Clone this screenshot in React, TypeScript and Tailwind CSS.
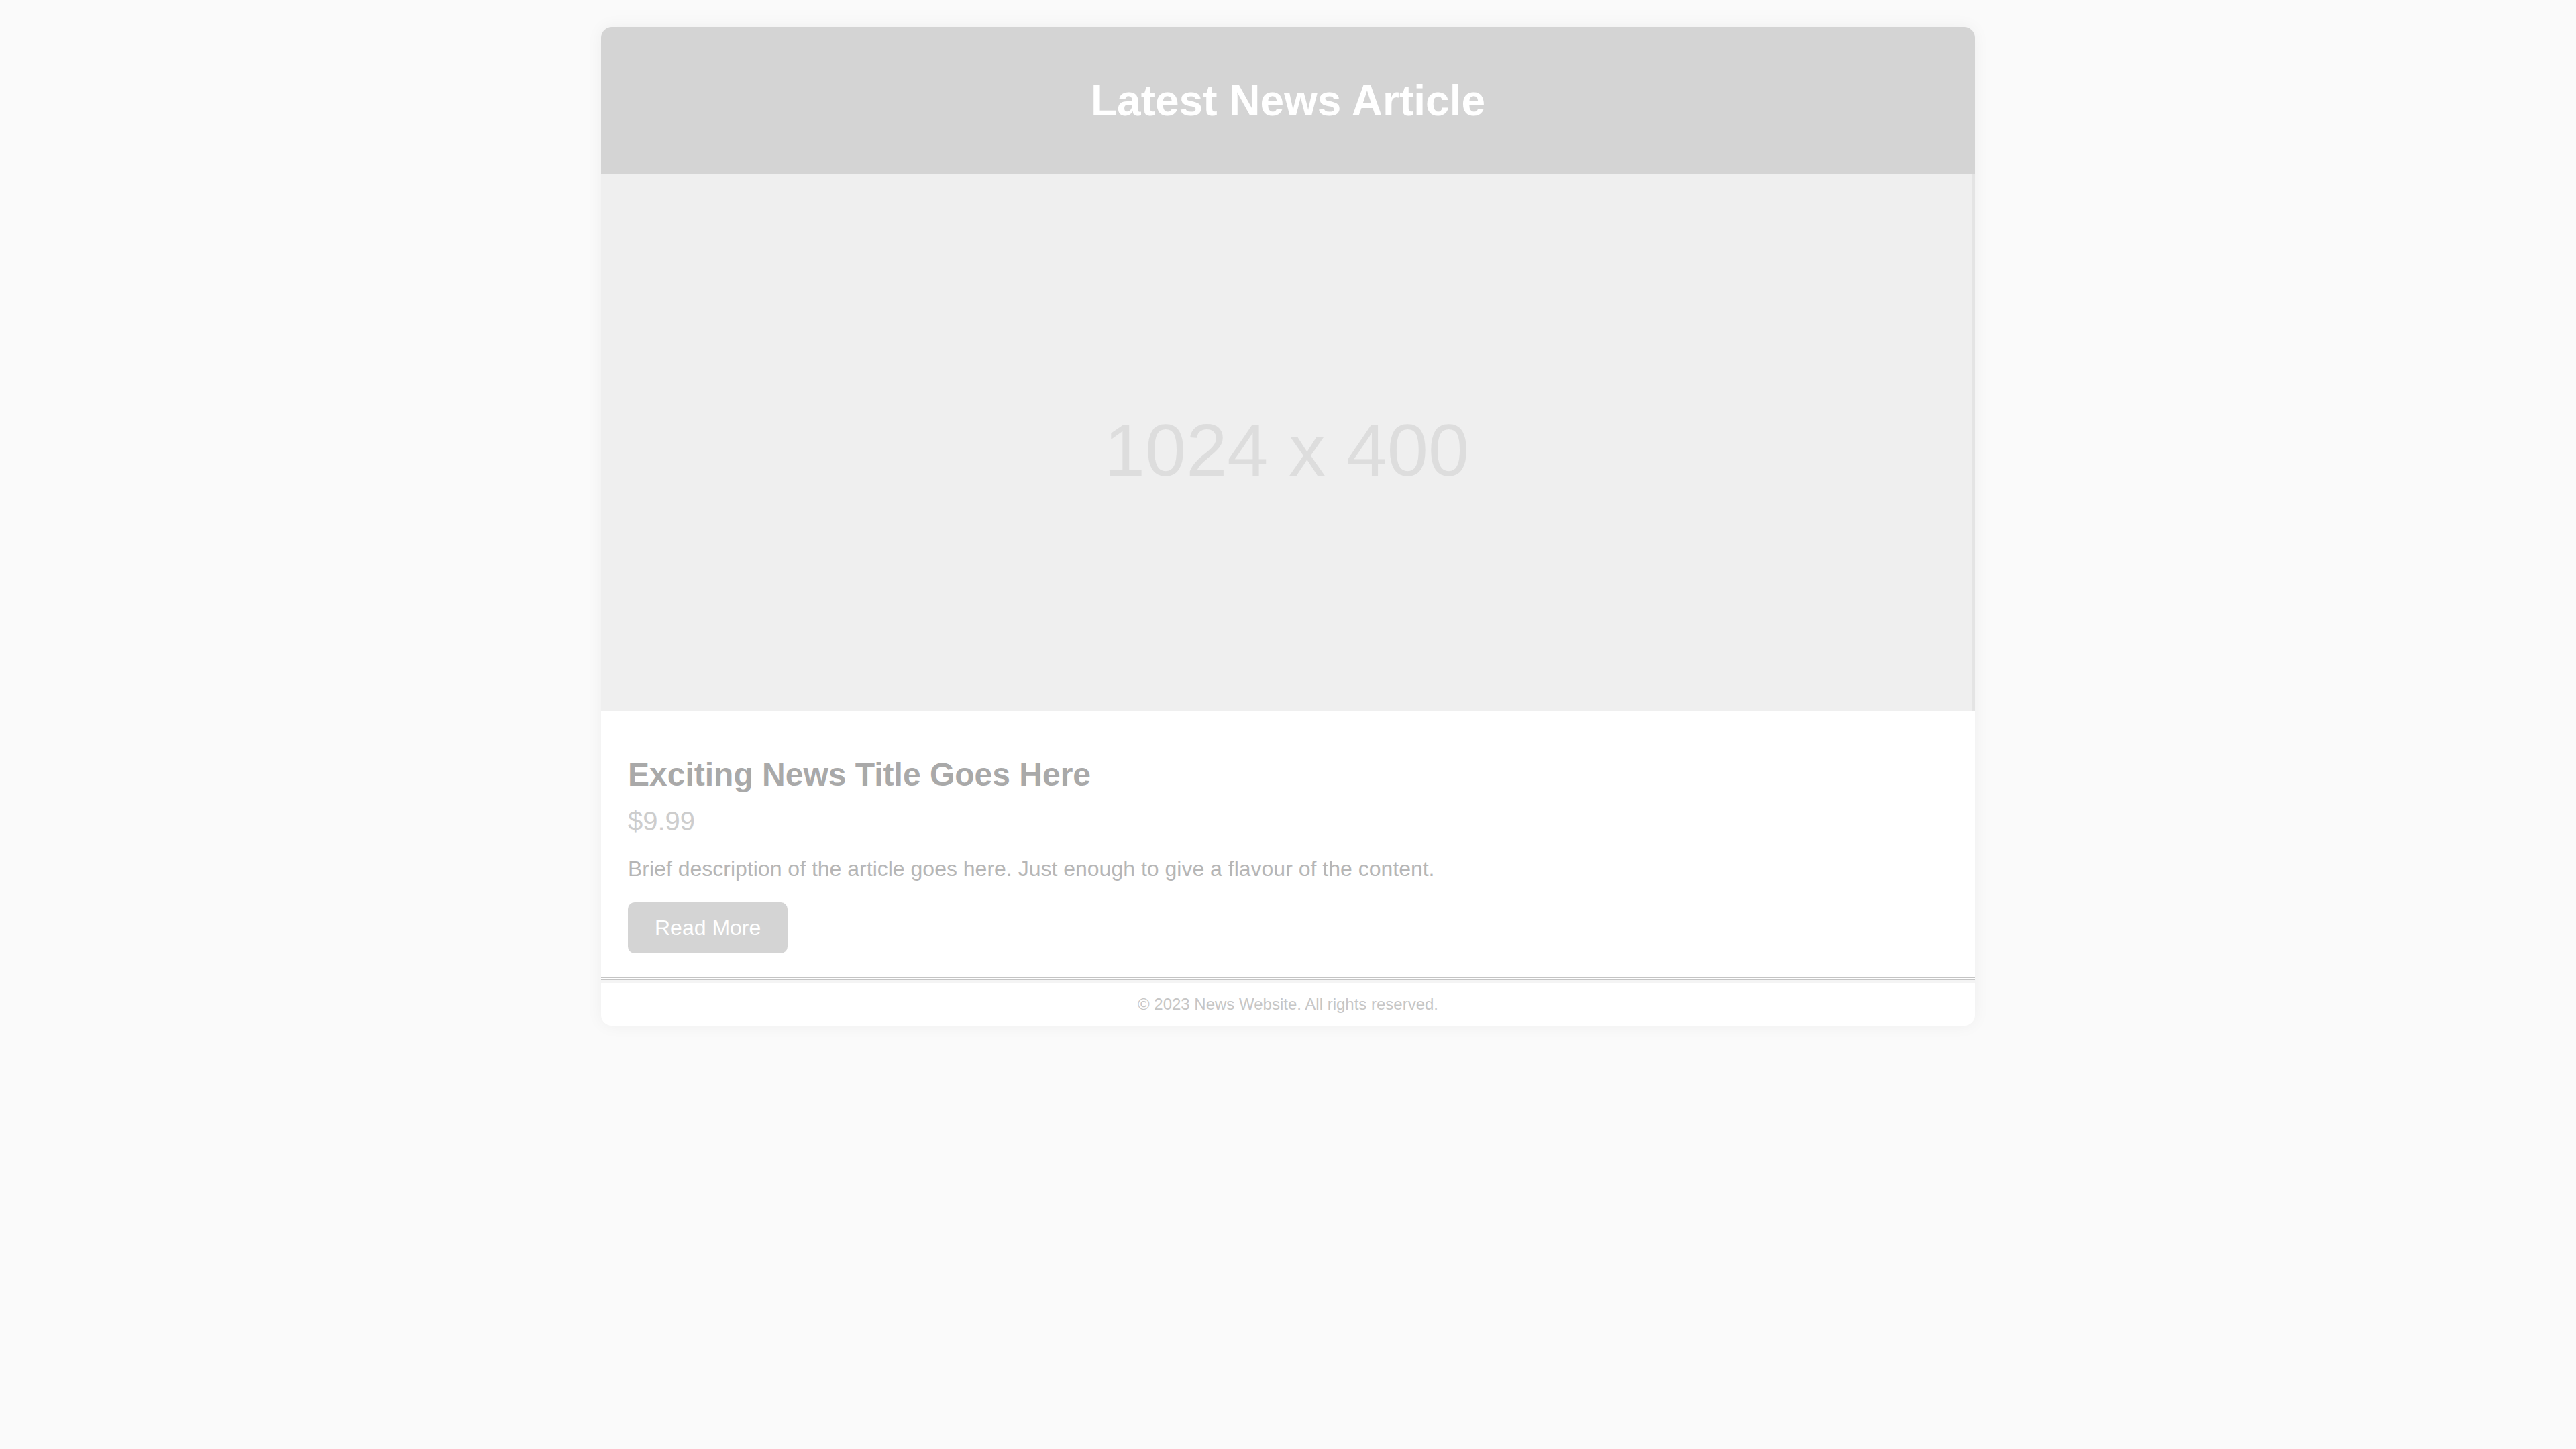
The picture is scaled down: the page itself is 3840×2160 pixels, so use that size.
import React from "react";

export default function App() {
  return (
    <div
      className="min-h-screen bg-[#fafafa] pt-[40px] pb-[40px]"
      style={{ fontFamily: '"Liberation Sans", Arial, sans-serif' }}
    >
      <div className="mx-auto w-[2048px] rounded-[16px] bg-white shadow-[0_0_24px_rgba(0,0,0,0.05)]">
        <header className="flex h-[220px] items-center justify-center rounded-t-[16px] bg-[#d4d4d4]">
          <h1 className="text-[64px] font-bold leading-none text-white">Latest News Article</h1>
        </header>
        <div className="flex h-[800px] items-center justify-center border-r-[4px] border-[#e4e4e4] bg-[#efefef] pt-[22px]">
          <span className="text-[110px] leading-none text-[#dddddd]">1024 x 400</span>
        </div>
        <div className="flex flex-col items-start px-[40px] pt-[63px] pb-[36px]">
          <h2 className="text-[48px] font-bold leading-[64px] text-[#a9a9a9]">
            Exciting News Title Goes Here
          </h2>
          <p className="mt-[9px] text-[40px] leading-[56px] text-[#cdcdcd]">$9.99</p>
          <p className="mt-[19px] text-[32px] leading-[48px] text-[#b6b6b6]">
            Brief description of the article goes here. Just enough to give a flavour of the content.
          </p>
          <button className="mt-[26px] h-[76px] rounded-[10px] bg-[#d4d4d4] px-[40px] text-[32px] leading-none text-white">
            Read More
          </button>
        </div>
        <div className="h-[1px] bg-[#c4c4c4]" />
        <div className="h-[2px] bg-white" />
        <div className="h-[1px] bg-[#c4c4c4]" />
        <footer className="rounded-b-[16px] border-t-[4px] border-[#f4f4f4] py-[14px] text-center">
          <p className="text-[24px] leading-[36px] text-[#c6c6c6]">
            © 2023 News Website. All rights reserved.
          </p>
        </footer>
      </div>
    </div>
  );
}
